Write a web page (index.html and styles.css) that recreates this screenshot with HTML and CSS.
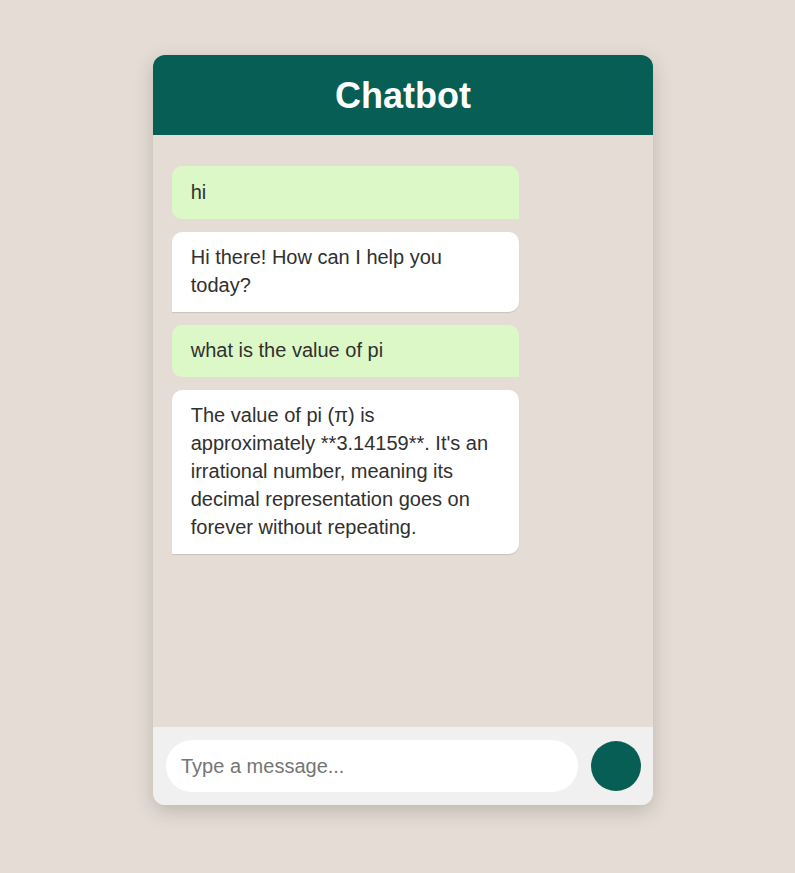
FILE: index.html
```html
<!DOCTYPE html>
<html lang="en">
<head>
<meta charset="utf-8">
<title>Chatbot</title>
<link rel="stylesheet" href="styles.css">
</head>
<body>
<div class="chat">
  <div class="chat-header">Chatbot</div>
  <div class="chat-messages">
    <div class="msg msg-user">hi</div>
    <div class="msg msg-bot">Hi there! How can I help you today?</div>
    <div class="msg msg-user">what is the value of pi</div>
    <div class="msg msg-bot">The value of pi (π) is approximately **3.14159**. It's an irrational number, meaning its decimal representation goes on forever without repeating.</div>
  </div>
  <div class="chat-input">
    <input class="input-field" type="text" placeholder="Type a message...">
    <button class="send-btn" type="button" aria-label="Send"></button>
  </div>
</div>
</body>
</html>
```

FILE: styles.css
```css
html, body {
  margin: 0;
  padding: 0;
}
body {
  background: #e5ddd5;
  font-family: "Liberation Sans", Arial, sans-serif;
  height: 873px;
  overflow: hidden;
}
.chat {
  width: 500px;
  height: 750px;
  margin: 55px 0 0 153px;
  border-radius: 12px;
  overflow: hidden;
  display: flex;
  flex-direction: column;
  box-shadow: 0 6px 20px rgba(0, 0, 0, 0.18);
  background: #e5ddd5;
}
.chat-header {
  height: 80px;
  flex: none;
  background: #075e54;
  color: #fff;
  font-weight: bold;
  font-size: 36px;
  display: flex;
  align-items: center;
  justify-content: center;
  padding-top: 1px;
  box-sizing: border-box;
}
.chat-messages {
  flex: 1;
  padding: 18.75px;
  background: #e5ddd5;
}
.msg {
  max-width: 75%;
  box-sizing: border-box;
  padding: 12.5px 19px;
  margin: 12.5px 0;
  font-size: 20px;
  line-height: 27.8px;
  color: #303030;
  border-radius: 10px;
}
.msg-user {
  background: #dcf8c6;
  border-bottom-right-radius: 0;
}
.msg-bot {
  background: #fff;
  border-bottom-left-radius: 0;
  box-shadow: 0 1px 1px rgba(0, 0, 0, 0.12);
}
.chat-input {
  flex: none;
  height: 78px;
  box-sizing: border-box;
  background: #f0f0f0;
  display: flex;
  align-items: center;
  gap: 13px;
  padding: 0 12px 0 13px;
}
.input-field {
  flex: 1;
  height: 52px;
  box-sizing: border-box;
  border: none;
  border-radius: 26px;
  background: #fff;
  padding: 0 15px;
  font-family: "Liberation Sans", Arial, sans-serif;
  font-size: 20px;
  color: #303030;
  outline: none;
}
.input-field::placeholder {
  color: #757575;
}
.send-btn {
  width: 50px;
  height: 50px;
  flex: none;
  border: none;
  border-radius: 50%;
  background: #075e54;
  padding: 0;
}
```
